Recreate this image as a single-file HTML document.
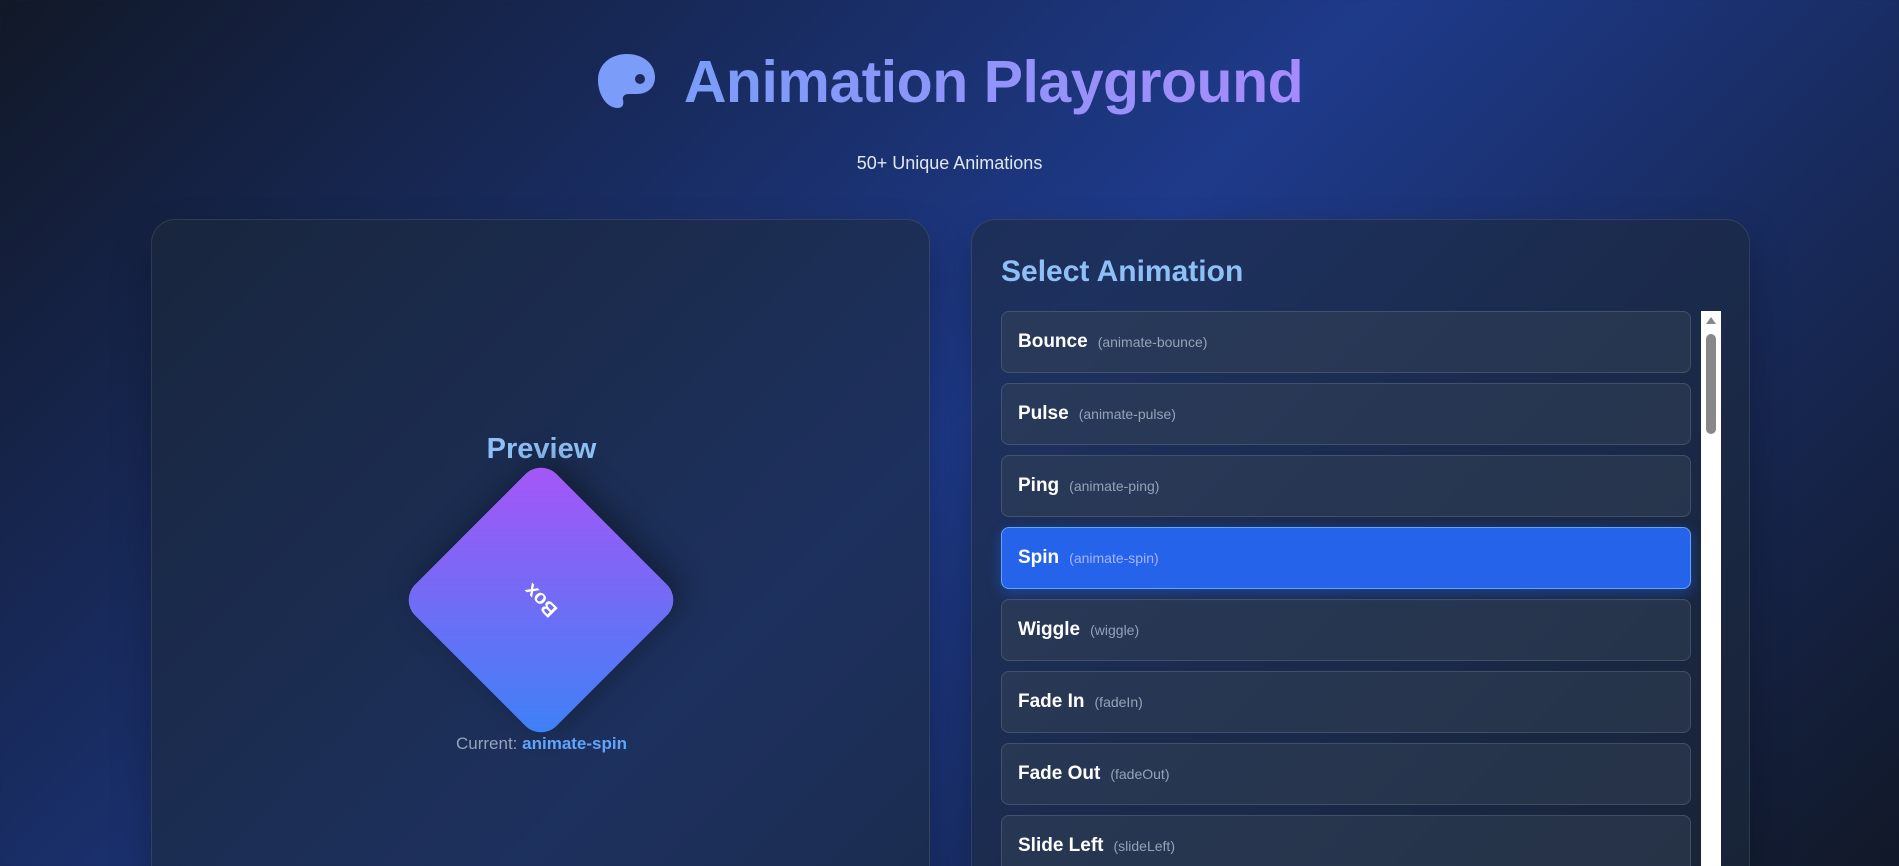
<!DOCTYPE html>
<html><head><meta charset="utf-8"><style>
*{box-sizing:border-box;margin:0;padding:0}
html,body{width:1899px;height:866px;overflow:hidden}
body{font-family:"Liberation Sans",sans-serif;background:linear-gradient(135deg,#111827 0%,#1e3a8a 50%,#111827 100%);position:relative;color:#fff}
.title{position:absolute;top:42px;left:0;width:1899px;text-align:center;font-size:59px;font-weight:bold;line-height:80px;letter-spacing:-0.5px}
.title span.t{background:linear-gradient(90deg,#7b9cf9,#a78bfa);-webkit-background-clip:text;background-clip:text;color:transparent}
.title svg{vertical-align:-8px;margin-right:26px}
.sub{position:absolute;top:153px;width:1899px;text-align:center;font-size:18px;color:#e2e8f0}
.panel{position:absolute;top:219px;height:700px;border-radius:24px;background:rgba(30,41,59,0.55);border:1px solid rgba(255,255,255,0.1);box-shadow:0 20px 40px rgba(0,0,0,.25)}
.left{left:151px;width:779px}
.right{left:971px;width:779px}
.prev{position:absolute;left:0;width:779px;top:213px;text-align:center;font-size:29px;font-weight:bold;color:#8ec0f5}
.box{position:absolute;left:289px;top:280px;width:200px;height:200px;border-radius:22px;transform:rotate(225deg);background:linear-gradient(-45deg,#a855f7,#3b82f6);box-shadow:0 10px 30px rgba(0,0,0,.35);display:flex;align-items:center;justify-content:center;font-weight:bold;font-size:20px}
.cur{position:absolute;left:0;width:779px;top:514px;text-align:center;font-size:17px;color:#94a3b8}
.cur b{color:#60a5fa}
.sel{position:absolute;left:29px;top:35px;font-size:30px;font-weight:bold;color:#8ec0f5}
.item{position:absolute;left:29px;width:690px;height:62px;border-radius:8px;background:rgba(51,65,85,0.5);border:1px solid rgba(148,163,184,0.25);padding-left:16px;display:flex;align-items:center}
.item b{font-size:19px;color:#fff;margin-right:10px}
.item i{font-style:normal;font-size:14px;color:#94a3b8}
.item.on{background:#2563eb;border-color:#60a5fa;box-shadow:0 4px 14px rgba(37,99,235,.45)}
.item.on i{color:#a5b4fc}
.sb{position:absolute;left:729px;top:91px;width:20px;height:620px;background:#fff}
.sb .a{position:absolute;left:5px;top:6px;width:0;height:0;border-left:5px solid transparent;border-right:5px solid transparent;border-bottom:7px solid #888}
.sb .th{position:absolute;left:5px;top:23px;width:10px;height:100px;border-radius:5px;background:#888}
</style></head><body>
<div class="title"><svg width="62" height="58" viewBox="0 0 62 58"><path fill="#7b9cf9" d="M31 2C14 2 2 13 2 28c0 14 8 28 20 28 5 0 6-4 5-8-1-4 2-6 6-6h8c10 0 18-6 18-17C59 12 47 2 31 2z"/><circle cx="44" cy="27" r="5" fill="#1c2a5e"/></svg><span class="t">Animation Playground</span></div>
<div class="sub">50+ Unique Animations</div>
<div class="panel left">
<div class="prev">Preview</div>
<div class="box">Box</div>
<div class="cur">Current: <b>animate-spin</b></div>
</div>
<div class="panel right">
<div class="sel">Select Animation</div>
<div class="item" style="top:91px"><b>Bounce</b><i>(animate-bounce)</i></div>
<div class="item" style="top:163px"><b>Pulse</b><i>(animate-pulse)</i></div>
<div class="item" style="top:235px"><b>Ping</b><i>(animate-ping)</i></div>
<div class="item on" style="top:307px"><b>Spin</b><i>(animate-spin)</i></div>
<div class="item" style="top:379px"><b>Wiggle</b><i>(wiggle)</i></div>
<div class="item" style="top:451px"><b>Fade In</b><i>(fadeIn)</i></div>
<div class="item" style="top:523px"><b>Fade Out</b><i>(fadeOut)</i></div>
<div class="item" style="top:595px"><b>Slide Left</b><i>(slideLeft)</i></div>
<div class="sb"><div class="a"></div><div class="th"></div></div>
</div>
</body></html>
